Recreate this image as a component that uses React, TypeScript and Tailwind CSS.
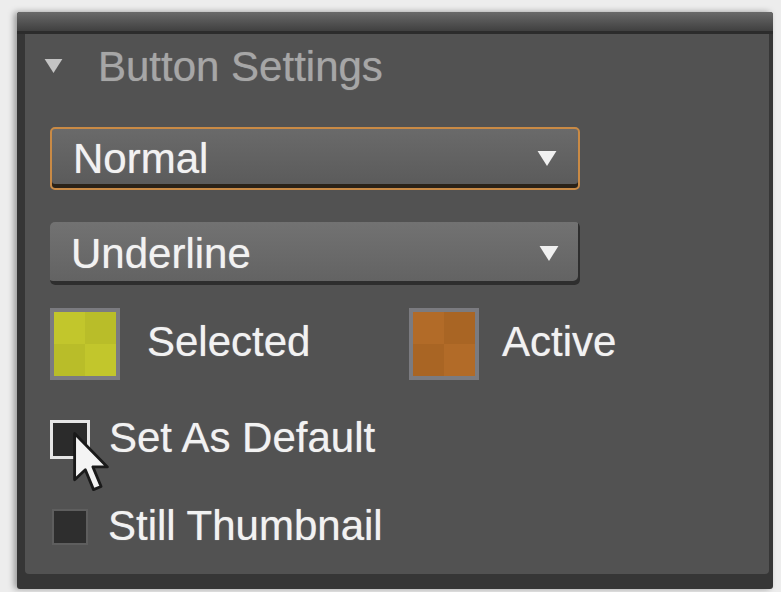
import React from "react";

const font = { fontFamily: '"Liberation Sans", Arial, sans-serif' };

function Caret({ className }: { className?: string }) {
  return (
    <svg viewBox="0 0 22 18" className={className}>
      <path d="M1 1 L21 1 L11 17 Z" fill="currentColor" />
    </svg>
  );
}

const txt =
  "text-[42px] leading-none text-[#f2f2f2] [text-shadow:0_0_1px_rgba(255,255,255,0.6)]";

function Dropdown({ label, active }: { label: string; active?: boolean }) {
  return (
    <div
      className={
        "relative flex h-[63px] w-[530px] items-center justify-between rounded-[5px] pl-[21px] pr-[20px] " +
        (active
          ? "border-2 border-[#c98a45] bg-gradient-to-b from-[#6a6a6a] to-[#5a5a5a] shadow-[inset_0_-4px_0_#2a2218]"
          : "bg-gradient-to-b from-[#727272] to-[#626262] shadow-[inset_-2px_-4px_0_#2e2e2e]")
      }
    >
      <span className={txt}>{label}</span>
      <Caret className="h-[17px] w-[22px] text-[#f0f0f0]" />
    </div>
  );
}

function Swatch({ a, b }: { a: string; b: string }) {
  return (
    <div className="h-[72px] w-[70px] bg-[#7b7b80] p-[4px]">
      <div className="grid h-full w-full grid-cols-2 grid-rows-2">
        <div style={{ background: a }} />
        <div style={{ background: b }} />
        <div style={{ background: b }} />
        <div style={{ background: a }} />
      </div>
    </div>
  );
}

export default function App() {
  return (
    <div className="h-[592px] w-[781px] overflow-hidden bg-[#ededed]" style={font}>
      <div className="ml-[17px] mt-[12px] flex h-[577px] w-[756px] flex-col rounded-[3px] bg-[#363636] shadow-[-3px_0_6px_rgba(0,0,0,0.35)]">
        <div className="h-[22px] rounded-t-[3px] bg-gradient-to-b from-[#6a6a6a] to-[#404040] border-b-[3px] border-[#2c2c2c]" />
        <div className="ml-[8px] mr-[4px] mb-[15px] flex flex-1 flex-col rounded-b-[4px] bg-[#525252] pl-[25px]">
          <div className="mt-[12px] flex h-[42px] items-center">
            <Caret className="ml-[-8px] mt-[-2px] h-[16px] w-[23px] text-[#c4c4c4]" />
            <span className="ml-[33px] text-[42px] leading-none text-[#a6a6a6] [text-shadow:0_0_1px_rgba(200,200,200,0.5)]">
              Button Settings
            </span>
          </div>
          <div className="mt-[39px]">
            <Dropdown label="Normal" active />
          </div>
          <div className="mt-[32px]">
            <Dropdown label="Underline" />
          </div>
          <div className="mt-[23px] flex items-center">
            <div className="flex w-[359px] items-center">
              <Swatch a="#c2c62c" b="#b9bd29" />
              <span className={"ml-[27px] mt-[-4px] " + txt}>Selected</span>
            </div>
            <Swatch a="#b26b28" b="#a96524" />
            <span className={"ml-[23px] mt-[-4px] " + txt}>Active</span>
          </div>
          <div className="relative mt-[39px] flex items-center">
            <div className="h-[39px] w-[40px] border-[3px] border-[#e6e6e6] bg-[#2b2b2b]" />
            <span className={"ml-[19px] mt-[-2px] " + txt}>Set As Default</span>
            <svg
              viewBox="0 0 12 20"
              className="absolute left-[22px] top-[12px] h-[63px] w-[38px]"
            >
              <path
                d="M0.8 0.8 L0.8 15.5 L4.2 12.3 L6.8 18.6 L9.2 17.6 L6.6 11.4 L11.2 11.4 Z"
                fill="#f4f4f4"
                stroke="#1a1a1a"
                strokeWidth="0.9"
                strokeLinejoin="round"
              />
            </svg>
          </div>
          <div className="mt-[48px] flex items-center">
            <div className="ml-[2px] h-[36px] w-[36px] border-[2px] border-[#5e5e5e] bg-[#2e2e2e]" />
            <span className={"ml-[20px] mt-[-2px] " + txt}>Still Thumbnail</span>
          </div>
        </div>
      </div>
    </div>
  );
}
